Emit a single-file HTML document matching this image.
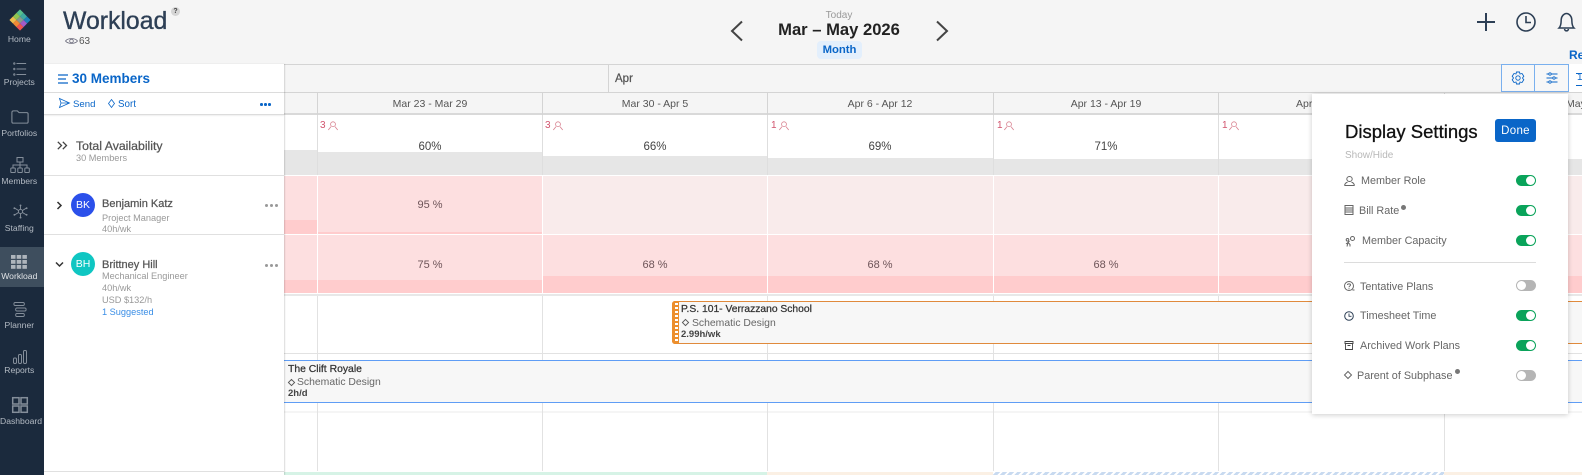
<!DOCTYPE html>
<html><head><meta charset="utf-8"><style>
html,body{margin:0;padding:0}
body{width:1582px;height:475px;position:relative;overflow:hidden;background:#f5f5f5;font-family:"Liberation Sans",sans-serif;color:#444}
.t{position:absolute;white-space:nowrap;line-height:16px;height:16px}
.c{transform:translateX(-50%)}
.r{position:absolute}
svg{position:absolute;overflow:visible}
.nav{color:#b3bac3;font-size:8.6px;left:0;width:38.6px;text-align:center}
.s{fill:none;stroke:#848e9a;stroke-width:1}
.date{font-size:10.5px;color:#555}
.pct{font-size:11.5px;color:#444}
.pk{font-size:11px;color:#6d5458}
.red{font-size:10px;color:#d2546e}
.sub{font-size:9.2px;color:#999}
.sb{-webkit-text-stroke:.25px currentColor}
.name{font-size:11px;color:#555;-webkit-text-stroke:.25px currentColor}
.lab{font-size:10.8px;color:#666}
.tg{position:absolute;left:1516px;width:20px;height:11px;border-radius:5.5px;background:#0aa35a;margin-top:-1px}
.tg:after{content:"";position:absolute;right:1px;top:1px;width:9px;height:9px;border-radius:50%;background:#fff}
.tg.off{background:#b5b5b5}
.tg.off:after{right:auto;left:1px}
.dot{position:absolute;width:3px;height:3px;border-radius:50%}
.ic{fill:none;stroke:#666;stroke-width:1}
</style></head><body>

<!-- main white grid -->
<div class="r" style="left:284px;top:114px;width:1298px;height:361px;background:#fff"></div>

<!-- timeline header rows -->
<div class="r" style="left:284px;top:64px;width:1298px;height:28px;background:#f5f5f5;border-top:1px solid #d4d4d4;box-sizing:border-box"></div>
<div class="r" style="left:284px;top:92px;width:1298px;height:23px;background:#f5f5f5;border-top:1px solid #d4d4d4;border-bottom:2px solid #d9d9d9;box-sizing:border-box"></div>
<div class="r" style="left:608px;top:64px;width:1px;height:28px;background:#d4d4d4"></div>
<div class="t sb" style="left:615px;top:71px;font-size:11.5px;color:#555">Apr</div>
<div class="r" style="left:317px;top:92px;width:1px;height:23px;background:#d4d4d4"></div>
<div class="r" style="left:542px;top:92px;width:1px;height:23px;background:#d4d4d4"></div>
<div class="r" style="left:767px;top:92px;width:1px;height:23px;background:#d4d4d4"></div>
<div class="r" style="left:993px;top:92px;width:1px;height:23px;background:#d4d4d4"></div>
<div class="r" style="left:1218px;top:92px;width:1px;height:23px;background:#d4d4d4"></div>
<div class="r" style="left:1444px;top:92px;width:1px;height:23px;background:#d4d4d4"></div>
<div class="t c date" style="left:430px;top:96px">Mar 23 - Mar 29</div>
<div class="t c date" style="left:655px;top:96px">Mar 30 - Apr 5</div>
<div class="t c date" style="left:880px;top:96px">Apr 6 - Apr 12</div>
<div class="t c date" style="left:1106px;top:96px">Apr 13 - Apr 19</div>
<div class="t date" style="left:1296px;top:96px">Apr</div>
<div class="t date" style="left:1566px;top:96px">May</div>

<!-- availability -->
<div class="r" style="left:284px;top:150px;width:33px;height:25px;background:#e6e6e6"></div>
<div class="r" style="left:318px;top:152px;width:224px;height:23px;background:#e6e6e6"></div>
<div class="r" style="left:543px;top:156px;width:224px;height:19px;background:#e6e6e6"></div>
<div class="r" style="left:768px;top:158px;width:225px;height:17px;background:#e6e6e6"></div>
<div class="r" style="left:994px;top:159px;width:224px;height:16px;background:#e6e6e6"></div>
<div class="r" style="left:1219px;top:159px;width:363px;height:16px;background:#e6e6e6"></div>
<div class="r" style="left:317px;top:115px;width:1px;height:60px;background:#dedede"></div>
<div class="r" style="left:542px;top:115px;width:1px;height:60px;background:#dedede"></div>
<div class="r" style="left:767px;top:115px;width:1px;height:60px;background:#dedede"></div>
<div class="r" style="left:993px;top:115px;width:1px;height:60px;background:#dedede"></div>
<div class="r" style="left:1218px;top:115px;width:1px;height:60px;background:#dedede"></div>
<div class="t red" style="left:320px;top:118px">3</div>
<div class="t red" style="left:545px;top:118px">3</div>
<div class="t red" style="left:771px;top:118px">1</div>
<div class="t red" style="left:997px;top:118px">1</div>
<div class="t red" style="left:1222px;top:118px">1</div>
<svg width="10" height="10" style="left:328px;top:121px" viewBox="0 0 10 10"><g fill="none" stroke="#d8808f" stroke-width=".8"><circle cx="5" cy="3.2" r="2.4"/><path d="M.3 9 3 5.6M9.7 9 7 5.6"/></g></svg>
<svg width="10" height="10" style="left:553px;top:121px" viewBox="0 0 10 10"><g fill="none" stroke="#d8808f" stroke-width=".8"><circle cx="5" cy="3.2" r="2.4"/><path d="M.3 9 3 5.6M9.7 9 7 5.6"/></g></svg>
<svg width="10" height="10" style="left:779px;top:121px" viewBox="0 0 10 10"><g fill="none" stroke="#d8808f" stroke-width=".8"><circle cx="5" cy="3.2" r="2.4"/><path d="M.3 9 3 5.6M9.7 9 7 5.6"/></g></svg>
<svg width="10" height="10" style="left:1004px;top:121px" viewBox="0 0 10 10"><g fill="none" stroke="#d8808f" stroke-width=".8"><circle cx="5" cy="3.2" r="2.4"/><path d="M.3 9 3 5.6M9.7 9 7 5.6"/></g></svg>
<svg width="10" height="10" style="left:1229px;top:121px" viewBox="0 0 10 10"><g fill="none" stroke="#d8808f" stroke-width=".8"><circle cx="5" cy="3.2" r="2.4"/><path d="M.3 9 3 5.6M9.7 9 7 5.6"/></g></svg>
<div class="t c pct" style="left:430px;top:139px">60%</div>
<div class="t c pct" style="left:655px;top:139px">66%</div>
<div class="t c pct" style="left:880px;top:139px">69%</div>
<div class="t c pct" style="left:1106px;top:139px">71%</div>

<!-- BK row -->
<div class="r" style="left:284px;top:176px;width:258px;height:58px;background:#fddfe0"></div>
<div class="r" style="left:542px;top:176px;width:1040px;height:58px;background:#f9ebeb"></div>
<div class="r" style="left:284px;top:220px;width:33px;height:14px;background:#ffcccd"></div>
<div class="r" style="left:318px;top:232px;width:224px;height:2px;background:#ffcccd"></div>
<!-- BH row -->
<div class="r" style="left:284px;top:235px;width:1298px;height:58px;background:#fddfe0"></div>
<div class="r" style="left:284px;top:280px;width:258px;height:13px;background:#ffcccd"></div>
<div class="r" style="left:542px;top:276px;width:1040px;height:17px;background:#ffcccd"></div>
<!-- white separators -->
<div class="r" style="left:317px;top:176px;width:1px;height:117px;background:#fff"></div>
<div class="r" style="left:542px;top:176px;width:1px;height:117px;background:#fff"></div>
<div class="r" style="left:767px;top:176px;width:1px;height:117px;background:#fff"></div>
<div class="r" style="left:993px;top:176px;width:1px;height:117px;background:#fff"></div>
<div class="r" style="left:1218px;top:176px;width:1px;height:117px;background:#fff"></div>
<div class="r" style="left:1444px;top:176px;width:1px;height:117px;background:#fff"></div>
<div class="t c pk" style="left:430px;top:197px">95 %</div>
<div class="t c pk" style="left:430px;top:257px">75 %</div>
<div class="t c pk" style="left:655px;top:257px">68 %</div>
<div class="t c pk" style="left:880px;top:257px">68 %</div>
<div class="t c pk" style="left:1106px;top:257px">68 %</div>

<!-- lower grid -->
<div class="r" style="left:284px;top:294px;width:1298px;height:2px;background:#e8e8e8"></div>
<div class="r" style="left:284px;top:353px;width:1298px;height:1px;background:#e2e2e2"></div>
<div class="r" style="left:284px;top:411px;width:1298px;height:2px;background:#f5f5f5"></div>
<div class="r" style="left:317px;top:296px;width:1px;height:175px;background:#e2e2e2"></div>
<div class="r" style="left:542px;top:296px;width:1px;height:175px;background:#e2e2e2"></div>
<div class="r" style="left:767px;top:296px;width:1px;height:175px;background:#e2e2e2"></div>
<div class="r" style="left:993px;top:296px;width:1px;height:175px;background:#e2e2e2"></div>
<div class="r" style="left:1218px;top:296px;width:1px;height:175px;background:#e2e2e2"></div>
<div class="r" style="left:1444px;top:296px;width:1px;height:175px;background:#e2e2e2"></div>

<!-- orange bar -->
<div class="r" style="left:672px;top:301px;width:920px;height:43px;background:#f7f7f7;border:1px solid #e08a3c;box-sizing:border-box;border-radius:3px 0 0 3px"></div>
<div class="r" style="left:672px;top:301px;width:7px;height:43px;border-radius:3px 0 0 3px;background:#ec8f2e"></div>
<div class="r" style="left:675px;top:303px;width:3px;height:39px;background:repeating-linear-gradient(#fff 0 2px,#ec8f2e 2px 4px)"></div>
<div class="t sb" style="left:681px;top:302px;font-size:10.3px;color:#333">P.S. 101- Verrazzano School</div>
<svg width="7" height="7" style="left:682px;top:319px" viewBox="0 0 7 7"><path d="M3.5.4 6.6 3.5 3.5 6.6.4 3.5Z" fill="none" stroke="#555" stroke-width=".9"/></svg>
<div class="t" style="left:692px;top:316px;font-size:10.4px;color:#666">Schematic Design</div>
<div class="t" style="left:681px;top:327px;font-size:9.5px;font-weight:bold;color:#444">2.99h/wk</div>

<!-- blue bar -->
<div class="r" style="left:284px;top:360px;width:1298px;height:43px;background:#f7f7f7;border-top:1px solid #5f9df5;border-bottom:1px solid #5f9df5;box-sizing:border-box"></div>
<div class="t sb" style="left:288px;top:362px;font-size:10.4px;color:#333">The Clift Royale</div>
<svg width="7" height="7" style="left:288px;top:379px" viewBox="0 0 7 7"><path d="M3.5.4 6.6 3.5 3.5 6.6.4 3.5Z" fill="none" stroke="#555" stroke-width=".9"/></svg>
<div class="t" style="left:297px;top:375px;font-size:10.4px;color:#666">Schematic Design</div>
<div class="t" style="left:288px;top:386px;font-size:9.5px;font-weight:bold;color:#444">2h/d</div>

<!-- bottom strip -->
<div class="r" style="left:284px;top:472px;width:483px;height:3px;background:#d6f3e6"></div>
<div class="r" style="left:767px;top:472px;width:226px;height:3px;background:#fbf0e4"></div>
<div class="r" style="left:993px;top:472px;width:451px;height:3px;background:repeating-linear-gradient(135deg,#fff 0 2px,#c8daf0 2px 5px)"></div>
<div class="r" style="left:1444px;top:472px;width:138px;height:3px;background:#fbf0e4"></div>

<!-- header -->
<div class="t" style="left:63px;top:8px;font-size:24.8px;line-height:28px;height:28px;color:#2d3f55;-webkit-text-stroke:.35px #2d3f55">Workload</div>
<div class="r" style="left:171px;top:7px;width:9px;height:9px;border-radius:50%;background:#d5d5d5"></div>
<div class="t c" style="left:175.5px;top:4px;font-size:7px;font-weight:bold;color:#444">?</div>
<svg width="13" height="8" style="left:65px;top:37px" viewBox="0 0 13 8"><path d="M.5 4C3 .8 10 .8 12.5 4 10 7.2 3 7.2.5 4Z" fill="none" stroke="#667" stroke-width=".8"/><circle cx="6.5" cy="4" r="1.8" fill="none" stroke="#667" stroke-width=".8"/></svg>
<div class="t" style="left:79px;top:34px;font-size:10px;color:#555">63</div>

<svg width="14" height="22" style="left:730px;top:20px" viewBox="0 0 14 22"><path d="M12 1.500 2 11 12 20.500" fill="none" stroke="#444" stroke-width="2"/></svg>
<svg width="14" height="22" style="left:935px;top:20px" viewBox="0 0 14 22"><path d="M2 1.500 12 11 2 20.500" fill="none" stroke="#444" stroke-width="2"/></svg>
<div class="t c" style="left:839px;top:8px;font-size:10px;color:#999">Today</div>
<div class="t c" style="left:839px;top:22px;font-size:16.6px;font-weight:bold;color:#222">Mar – May 2026</div>
<div class="r" style="left:817px;top:41px;width:45px;height:18px;background:#e3effc;border-radius:4px"></div>
<div class="t c" style="left:839.500px;top:42px;font-size:11.300px;font-weight:bold;color:#0a66c8">Month</div>

<svg width="20" height="20" style="left:1476px;top:12px" viewBox="0 0 20 20"><path d="M10 1V19M1 10H19" stroke="#2d3f55" stroke-width="2" fill="none"/></svg>
<svg width="22" height="22" style="left:1515px;top:11px" viewBox="0 0 22 22"><circle cx="11" cy="11" r="9" fill="none" stroke="#2d3f55" stroke-width="1.600"/><path d="M11 5V11.500H16" fill="none" stroke="#2d3f55" stroke-width="1.600"/></svg>
<svg width="20" height="22" style="left:1557px;top:11px" viewBox="0 0 20 22"><path d="M2 17C4.500 14.500 4 11 4.200 8.500 4.500 5 7 2.500 9.500 2.500S14.500 5 14.800 8.500C15 11 14.500 14.500 17 17ZM7.500 18C8 20.500 11 20.500 11.500 18" fill="none" stroke="#2d3f55" stroke-width="1.500"/></svg>
<div class="t" style="left:1569px;top:47px;font-size:12px;font-weight:bold;color:#0a66c8">Re</div>

<!-- toolbar buttons -->
<div class="r" style="left:1501px;top:64px;width:34px;height:28px;background:#f7f7f7;border:1px solid #7ab0ee;box-sizing:border-box"></div>
<div class="r" style="left:1534px;top:64px;width:35px;height:28px;background:#f7f7f7;border:1px solid #7ab0ee;box-sizing:border-box"></div>
<div class="r" style="left:1568px;top:64px;width:14px;height:28px;background:#fff;border-left:1px solid #7ab0ee;box-sizing:border-box"></div>
<svg width="14" height="14" style="left:1511px;top:71px" viewBox="0 0 14 14"><path d="M5.500 1H8.500L9 3 11 2.500 12.800 5.200 11.500 7 12.800 8.800 11 11.500 9 11 8.500 13H5.500L5 11 3 11.500 1.200 8.800 2.500 7 1.200 5.200 3 2.500 5 3Z" fill="none" stroke="#0a66c8" stroke-width=".9"/><circle cx="7" cy="7" r="2.200" fill="none" stroke="#0a66c8" stroke-width=".9"/></svg>
<svg width="12" height="12" style="left:1546px;top:72px" viewBox="0 0 12 12"><path d="M.5 2H11.500M.5 6H11.500M.5 10H11.500" stroke="#0a66c8" stroke-width=".9" fill="none"/><circle cx="4" cy="2" r="1.200" fill="#f7f7f7" stroke="#0a66c8" stroke-width=".8"/><circle cx="8" cy="6" r="1.200" fill="#f7f7f7" stroke="#0a66c8" stroke-width=".8"/><circle cx="4" cy="10" r="1.200" fill="#f7f7f7" stroke="#0a66c8" stroke-width=".8"/></svg>
<div class="t" style="left:1577px;top:70px;font-size:10px;color:#0a66c8">10</div>
<div class="r" style="left:1576px;top:73px;width:6px;height:1px;background:#0a66c8"></div>
<div class="r" style="left:1576px;top:85px;width:6px;height:1px;background:#0a66c8"></div>

<!-- left panel -->
<div class="r" style="left:44px;top:64px;width:240px;height:411px;background:#fff;box-shadow:1px 0 1px rgba(0,0,0,.14)"></div>
<div class="r" style="left:44px;top:92px;width:240px;height:1px;background:#dcdcdc"></div>
<div class="r" style="left:44px;top:114px;width:240px;height:1px;background:#dcdcdc;box-shadow:0 1px 1px rgba(0,0,0,.08)"></div>
<div class="r" style="left:44px;top:175px;width:240px;height:1px;background:#e0e0e0"></div>
<div class="r" style="left:44px;top:234px;width:240px;height:1px;background:#e0e0e0"></div>
<div class="r" style="left:44px;top:471px;width:240px;height:1px;background:#e0e0e0"></div>
<svg width="11" height="10" style="left:58px;top:74px" viewBox="0 0 11 10"><path d="M0 1H10M0 5H8M0 9H10" stroke="#0a66c8" stroke-width="1.200" fill="none"/></svg>
<div class="t" style="left:72px;top:71px;font-size:13.500px;font-weight:bold;color:#0a66c8">30 Members</div>
<svg width="11" height="10" style="left:59px;top:98px" viewBox="0 0 11 10"><path d="M.5.500 10.500 5 .5 9.500 2 5ZM2 5H10.500" fill="none" stroke="#0a66c8" stroke-width=".8"/></svg>
<div class="t" style="left:73px;top:97px;font-size:9.6px;color:#0a66c8">Send</div>
<svg width="7" height="9" style="left:108px;top:99px" viewBox="0 0 7 9"><path d="M3.500.5 6.500 4.500 3.500 8.500.5 4.500Z" fill="none" stroke="#0a66c8" stroke-width=".8"/></svg>
<div class="t" style="left:118px;top:97px;font-size:9.8px;color:#0a66c8">Sort</div>
<div class="dot" style="left:260px;top:103px;width:2.5px;height:2.5px;background:#0a66c8"></div>
<div class="dot" style="left:264px;top:103px;width:2.5px;height:2.5px;background:#0a66c8"></div>
<div class="dot" style="left:268px;top:103px;width:2.5px;height:2.5px;background:#0a66c8"></div>

<svg width="11" height="9" style="left:57px;top:141px" viewBox="0 0 11 9"><path d="M.8.800 4.500 4.500.8 8.200M5.800.800 9.500 4.500 5.800 8.200" fill="none" stroke="#444" stroke-width="1.300"/></svg>
<div class="t sb" style="left:76px;top:138px;font-size:12.300px;color:#555">Total Availability</div>
<div class="t sub" style="left:76px;top:150px">30 Members</div>

<svg width="7" height="9" style="left:56px;top:201px" viewBox="0 0 7 9"><path d="M1.500 1 5 4.500 1.500 8" fill="none" stroke="#333" stroke-width="1.500"/></svg>
<div class="r" style="left:71px;top:193px;width:24px;height:24px;border-radius:50%;background:#2b50ea"></div>
<div class="t c" style="left:83px;top:197px;font-size:10.500px;color:#fff">BK</div>
<div class="t name" style="left:102px;top:196px">Benjamin Katz</div>
<div class="t sub" style="left:102px;top:210px">Project Manager</div>
<div class="t sub" style="left:102px;top:221px">40h/wk</div>
<div class="dot" style="left:265px;top:204px;background:#999"></div>
<div class="dot" style="left:270px;top:204px;background:#999"></div>
<div class="dot" style="left:275px;top:204px;background:#999"></div>

<svg width="9" height="7" style="left:55px;top:261px" viewBox="0 0 9 7"><path d="M1 1.500 4.500 5 8 1.500" fill="none" stroke="#333" stroke-width="1.500"/></svg>
<div class="r" style="left:71px;top:252px;width:24px;height:24px;border-radius:50%;background:#0fc6c2"></div>
<div class="t c" style="left:83px;top:256px;font-size:10.500px;color:#fff">BH</div>
<div class="t name" style="left:102px;top:257px">Brittney Hill</div>
<div class="t sub" style="left:102px;top:268px">Mechanical Engineer</div>
<div class="t sub" style="left:102px;top:280px">40h/wk</div>
<div class="t sub" style="left:102px;top:292px">USD $132/h</div>
<div class="t" style="left:102px;top:304px;font-size:9.200px;color:#3a8ee6">1 Suggested</div>
<div class="dot" style="left:265px;top:264px;background:#999"></div>
<div class="dot" style="left:270px;top:264px;background:#999"></div>
<div class="dot" style="left:275px;top:264px;background:#999"></div>

<!-- sidebar -->
<div class="r" style="left:0;top:0;width:44px;height:475px;background:#1b2a3d"></div>
<div class="r" style="left:0;top:247px;width:44px;height:40px;background:#3e4e5e"></div>
<svg width="24" height="24" style="left:8px;top:8px" viewBox="-12 -12 24 24"><g transform="rotate(45)"><rect x="-7.500" y="-7.500" width="5" height="5" fill="#57c08d"/><rect x="-2.500" y="-7.500" width="5" height="5" fill="#3fa9a0"/><rect x="2.500" y="-7.500" width="5" height="5" fill="#1f7fb8"/><rect x="-7.500" y="-2.500" width="5" height="5" fill="#90c652"/><rect x="-2.500" y="-2.500" width="5" height="5" fill="#8a9a8c"/><rect x="2.500" y="-2.500" width="5" height="5" fill="#a35cc8"/><rect x="-7.500" y="2.500" width="5" height="5" fill="#eebd4e"/><rect x="-2.500" y="2.500" width="5" height="5" fill="#f08a35"/><rect x="2.500" y="2.500" width="5" height="5" fill="#ee5252"/></g></svg>
<div class="t nav" style="top:31px">Home</div>
<svg width="14" height="14" style="left:13px;top:62px" viewBox="0 0 16 14" preserveAspectRatio="none"><g class="s"><path d="M4 1.500H15M4 7H15M4 12.500H15"/><circle cx="1.500" cy="1.500" r=".8"/><circle cx="1.500" cy="7" r=".8"/><circle cx="1.500" cy="12.500" r=".8"/></g></svg>
<div class="t nav" style="top:74px">Projects</div>
<svg width="18" height="14" style="left:11px;top:110px" viewBox="0 0 20 16" preserveAspectRatio="none"><path class="s" style="stroke-width:1.200" d="M1 3C1 1.500 1.500 1 3 1H7L9 3H17.500C18.500 3 19 3.500 19 4.500V13.500C19 14.500 18.500 15 17.500 15H2.500C1.500 15 1 14.500 1 13.500Z"/></svg>
<div class="t nav" style="top:125px">Portfolios</div>
<svg width="20" height="16" style="left:10px;top:157px" viewBox="0 0 20 16"><g class="s"><rect x="7" y=".5" width="6" height="4.500"/><path d="M10 5V8M3 11V8H17V11M10 8V11"/><rect x=".8" y="11" width="4.500" height="4.500" rx=".8"/><rect x="7.800" y="11" width="4.500" height="4.500" rx=".8"/><rect x="14.800" y="11" width="4.500" height="4.500" rx=".8"/></g></svg>
<div class="t nav" style="top:173px">Members</div>
<svg width="15" height="15" style="left:12.500px;top:204px" viewBox="0 0 16 16"><g class="s"><circle cx="8" cy="8" r="2.200"/><path d="M8 2V5.800M8 10.200V14M2 4.500 6 7M10 9 14 11.500M14 4.500 10 7M6 9 2 11.500"/></g><g fill="#848e9a"><circle cx="8" cy="1.500" r="1"/><circle cx="8" cy="14.500" r="1"/><circle cx="1.500" cy="4.500" r="1"/><circle cx="14.500" cy="4.500" r="1"/><circle cx="1.500" cy="11.500" r="1"/><circle cx="14.500" cy="11.500" r="1"/></g></svg>
<div class="t nav" style="top:220px">Staffing</div>
<svg width="16" height="14" style="left:11px;top:255px" viewBox="0 0 16 14"><g fill="#aeb5bc"><rect x="0" y="0" width="4.500" height="3.800"/><rect x="5.700" y="0" width="4.500" height="3.800"/><rect x="11.400" y="0" width="4.500" height="3.800"/><rect x="0" y="5" width="4.500" height="3.800"/><rect x="5.700" y="5" width="4.500" height="3.800"/><rect x="11.400" y="5" width="4.500" height="3.800"/><rect x="0" y="10" width="4.500" height="3.800"/><rect x="5.700" y="10" width="4.500" height="3.800"/><rect x="11.400" y="10" width="4.500" height="3.800"/></g></svg>
<div class="t nav" style="top:268px;color:#e0e3e6">Workload</div>
<svg width="14" height="15" style="left:13px;top:302px" viewBox="0 0 16 15" preserveAspectRatio="none"><g class="s"><rect x="1" y=".5" width="12" height="3" rx="1.500"/><rect x="3" y="6" width="12" height="3" rx="1.500"/><rect x="3" y="11.500" width="10" height="3" rx="1.500"/></g></svg>
<div class="t nav" style="top:317px">Planner</div>
<svg width="14" height="14" style="left:13px;top:350px" viewBox="0 0 14 14"><g class="s"><rect x=".5" y="8" width="3" height="5.500" rx="1.200"/><rect x="5.500" y="4.500" width="3" height="9" rx="1.200"/><rect x="10.500" y=".5" width="3" height="13" rx="1.200"/></g></svg>
<div class="t nav" style="top:362px">Reports</div>
<svg width="16" height="16" style="left:12px;top:397px" viewBox="0 0 16 16"><g fill="none" stroke="#848e9a" stroke-width="1.500"><rect x=".7" y=".7" width="6.300" height="6.300"/><rect x="9" y=".7" width="6.300" height="6.300"/><rect x=".7" y="9" width="6.300" height="6.300"/><rect x="9" y="9" width="6.300" height="6.300"/></g></svg>
<div class="t nav" style="top:413px">Dashboard</div>

<!-- settings panel -->
<div class="r" style="left:1312px;top:94px;width:256px;height:320px;background:#fff;box-shadow:0 1px 5px rgba(0,0,0,.2)"></div>
<div class="t" style="left:1345px;top:122px;font-size:18.500px;line-height:20px;height:20px;color:#111;-webkit-text-stroke:.3px #111">Display Settings</div>
<div class="r" style="left:1495px;top:119px;width:41px;height:23px;background:#0a66c8;border-radius:3px"></div>
<div class="t c" style="left:1515.500px;top:123px;font-size:11.500px;color:#fff;letter-spacing:.3px">Done</div>
<div class="t" style="left:1345px;top:148px;font-size:10px;color:#b8b8b8">Show/Hide</div>

<svg width="11" height="10" style="left:1344px;top:176px" viewBox="0 0 11 10"><path class="ic" d="M2.800 3C2.800 1.500 4 .5 5.500 .5S8.200 1.500 8.200 3 7 5.500 5.500 5.500 2.800 4.500 2.800 3ZM.5 9.500C1 7.500 2.500 6.500 3.500 6.300M10.500 9.500C10 7.500 8.500 6.500 7.500 6.300M.5 9.500H10.500"/></svg>
<div class="t lab" style="left:1361px;top:173px">Member Role</div>
<div class="tg" style="top:176px"></div>
<svg width="10" height="10" style="left:1344px;top:205px" viewBox="0 0 10 10"><path class="ic" d="M1 .5H9V9.500H1ZM1 3H9M1 5H9M1 7H9"/></svg>
<div class="t lab" style="left:1359px;top:203px">Bill Rate</div>
<div class="r" style="left:1401px;top:205px;width:5px;height:5px;border-radius:50%;background:#777"></div>
<div class="tg" style="top:206px"></div>
<svg width="11" height="11" style="left:1344px;top:236px" viewBox="0 0 11 11"><path class="ic" d="M3 10.500 4 6.500 2 8M4 6.500 6 8.500 6 10.500M4 6.500 5.500 5"/><circle class="ic" cx="3.500" cy="3.800" r="1.300"/><circle class="ic" cx="8.500" cy="2.500" r="2"/></svg>
<div class="t lab" style="left:1362px;top:233px">Member Capacity</div>
<div class="tg" style="top:236px"></div>
<div class="r" style="left:1344px;top:262px;width:192px;height:1px;background:#dcdcdc"></div>
<svg width="11" height="11" style="left:1344px;top:281px" viewBox="0 0 11 11"><circle class="ic" cx="5" cy="5" r="4.500"/><path class="ic" d="M3.500 4C3.500 2.500 6.500 2.500 6.500 4 6.500 5 5 5 5 6.200M5 7.200V8.200M8.500 9H10.500"/></svg>
<div class="t lab" style="left:1360px;top:279px">Tentative Plans</div>
<div class="tg off" style="top:281px"></div>
<svg width="10" height="10" style="left:1344px;top:311px" viewBox="0 0 10 10"><circle cx="5" cy="5" r="4.300" fill="none" stroke="#2d3f55" stroke-width="1"/><path d="M5 2.500V5.300H7.500" fill="none" stroke="#2d3f55" stroke-width=".9"/></svg>
<div class="t lab" style="left:1360px;top:308px">Timesheet Time</div>
<div class="tg" style="top:311px"></div>
<svg width="10" height="9" style="left:1344px;top:341px" viewBox="0 0 10 9"><path d="M1 .5H9V2.500H1ZM1.500 2.500V8.500H8.500V2.500M3.500 4.500H6.500" fill="none" stroke="#444" stroke-width=".9"/></svg>
<div class="t lab" style="left:1360px;top:338px">Archived Work Plans</div>
<div class="tg" style="top:341px"></div>
<svg width="8" height="8" style="left:1344px;top:371px" viewBox="0 0 8 8"><path class="ic" d="M4 .5 7.500 4 4 7.500 .5 4Z"/></svg>
<div class="t lab" style="left:1357px;top:368px">Parent of Subphase</div>
<div class="r" style="left:1455px;top:369px;width:5px;height:5px;border-radius:50%;background:#777"></div>
<div class="tg off" style="top:371px"></div>

</body></html>
